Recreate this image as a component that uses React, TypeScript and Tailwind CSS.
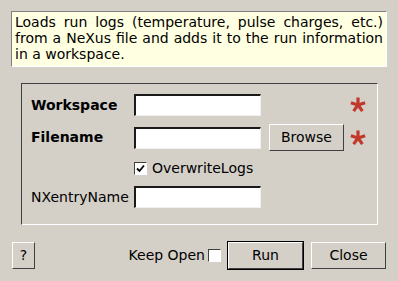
import React from "react";

const Asterisk = () => (
  <svg width="18" height="18" viewBox="-9 -9 18 18">
    {[-90, -18, 54, 126, 198].map((a) => {
      const r = (a * Math.PI) / 180;
      return (
        <line
          key={a}
          x1={0}
          y1={0}
          x2={7.5 * Math.cos(r)}
          y2={7.5 * Math.sin(r)}
          stroke="#c0392b"
          strokeWidth={3.2}
          strokeLinecap="butt"
        />
      );
    })}
  </svg>
);

const Input = () => (
  <div className="w-[127px] h-[22px] border-t-2 border-l-2 border-t-[#1a1a1a] border-l-[#1a1a1a] border-b border-r border-b-[#f0f0f0] border-r-[#f0f0f0] bg-white" />
);

const Button = ({ label, w, def }: { label: string; w: string; def?: boolean }) => (
  <div className={`${def ? "border border-black" : ""}`}>
    <div
      className={`${w} h-[27px] flex items-center justify-center border-t border-l border-t-white border-l-white border-b border-r border-b-[#404040] border-r-[#404040] bg-[#d4d0c8]`}
    >
      {label}
    </div>
  </div>
);

const Check = ({ checked }: { checked?: boolean }) => (
  <div className="w-[13px] h-[13px] shrink-0 border-t border-l border-t-[#404040] border-l-[#404040] border-b border-r border-b-white border-r-white bg-white flex items-center justify-center">
    {checked && (
      <svg width="9" height="9" viewBox="0 0 9 9">
        <path d="M1 4.5 L3.5 7 L8 1.5" stroke="black" strokeWidth="1.8" fill="none" />
      </svg>
    )}
  </div>
);

export default function App() {
  return (
    <div
      className="w-[398px] h-[281px] bg-[#d4d0c8] text-black text-[14px] flex flex-col overflow-hidden"
      style={{ fontFamily: '"DejaVu Sans", sans-serif' }}
    >
      <div className="mt-[11px] mx-[11px] h-[56px] bg-[#ffffe1] border-t border-l border-t-[#808080] border-l-[#808080] border-b border-r border-b-white border-r-white px-[3px] pt-[2px] leading-[16px] text-justify">
        Loads run logs (temperature, pulse charges, etc.) from a NeXus file and adds it to the run information in a workspace.
      </div>

      <div className="mt-[16px] ml-[21px] w-[357px] h-[142px] border-t border-l border-t-[#404040] border-l-[#404040] border-b border-r border-b-white border-r-white pl-[9px] pt-[10px] flex flex-col">
        <div className="h-[22px] flex items-center">
          <div className="w-[103px] font-bold">Workspace</div>
          <Input />
          <div className="ml-[88px]">
            <Asterisk />
          </div>
        </div>
        <div className="mt-[8px] h-[27px] flex items-center">
          <div className="w-[103px] font-bold">Filename</div>
          <Input />
          <div className="ml-[8px]">
            <Button label="Browse" w="w-[75px]" />
          </div>
          <div className="ml-[5px]">
            <Asterisk />
          </div>
        </div>
        <div className="mt-[6px] h-[22px] flex items-center">
          <div className="w-[103px]" />
          <Check checked />
          <div className="ml-[5px]">OverwriteLogs</div>
        </div>
        <div className="mt-[7px] h-[22px] flex items-center">
          <div className="w-[103px]">NXentryName</div>
          <Input />
        </div>
      </div>

      <div className="mt-[16px] h-[28px] flex items-center pl-[12px] pr-[12px]">
        <Button label="?" w="w-[23px]" />
        <div className="ml-auto whitespace-nowrap">Keep Open</div>
        <div className="ml-[3px]">
          <Check />
        </div>
        <div className="ml-[6px]">
          <Button label="Run" w="w-[75px]" def />
        </div>
        <div className="ml-[7px]">
          <Button label="Close" w="w-[75px]" />
        </div>
      </div>
    </div>
  );
}
